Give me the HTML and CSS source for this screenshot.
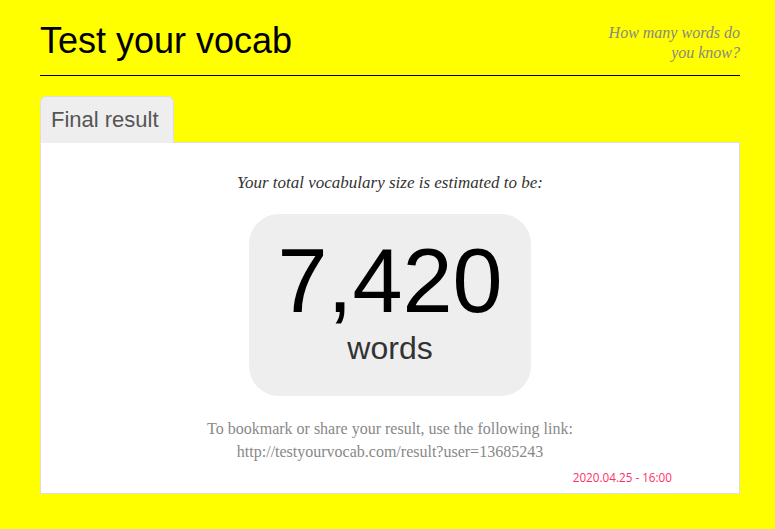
FILE: index.html
```html
<!DOCTYPE html>
<html>
<head>
<meta charset="utf-8">
<link rel="stylesheet" href="styles.css">
</head>
<body>
<div class="page">
  <header class="header">
    <h1 class="title">Test your vocab</h1>
    <div class="tagline">How many words do<br>you know?</div>
  </header>
  <div class="tabs">
    <div class="tab">Final result</div>
  </div>
  <div class="panel">
    <p class="intro">Your total vocabulary size is estimated to be:</p>
    <div class="result">
      <div class="number">7,420</div>
      <div class="unit">words</div>
    </div>
    <p class="share">To bookmark or share your result, use the following link:<br>http://testyourvocab.com/result?user=13685243</p>
    <div class="date">2020.04.25 - 16:00</div>
  </div>
</div>
</body>
</html>
```

FILE: styles.css
```css
html, body {
  margin: 0;
  padding: 0;
  background: #ffff00;
}
.page {
  width: 700px;
  margin: 0 0 0 40px;
  padding-top: 18px;
}
.header {
  display: flex;
  justify-content: space-between;
  align-items: flex-start;
  border-bottom: 1px solid #000;
  height: 57px;
}
.title {
  margin: 0;
  font-family: "Liberation Sans", Arial, sans-serif;
  font-weight: normal;
  font-size: 36px;
  line-height: 46px;
  color: #000;
}
.tagline {
  margin-top: 5px;
  font-family: "Liberation Serif", serif;
  font-style: italic;
  font-size: 16px;
  line-height: 20px;
  color: #888;
  text-align: right;
}
.tabs {
  display: flex;
  margin-top: 20px;
}
.tab {
  box-sizing: border-box;
  width: 134px;
  height: 47px;
  margin-bottom: -1px;
  padding: 11px 0 0 10px;
  background: #eeeeee;
  border: 1px solid #dddddd;
  border-bottom: 1px solid #eeeeee;
  border-radius: 6px 6px 0 0;
  font-family: "Liberation Sans", Arial, sans-serif;
  font-size: 22px;
  line-height: 24px;
  color: #555;
}
.panel {
  box-sizing: border-box;
  height: 352px;
  background: #fff;
  border: 1px solid #dddddd;
  display: flex;
  flex-direction: column;
  align-items: center;
}
.intro {
  margin: 30px 0 0;
  font-family: "Liberation Serif", serif;
  font-style: italic;
  font-size: 17px;
  line-height: 20px;
  color: #333;
}
.result {
  margin-top: 21px;
  width: 282px;
  height: 182px;
  background: #eeeeee;
  border-radius: 30px;
  display: flex;
  flex-direction: column;
  align-items: center;
  font-family: "Liberation Sans", Arial, sans-serif;
}
.number {
  margin-top: 20px;
  font-size: 90px;
  line-height: 95px;
  color: #000;
}
.unit {
  font-size: 32px;
  line-height: 38px;
  color: #333;
}
.share {
  margin: 21px 0 0;
  font-family: "Liberation Serif", serif;
  font-size: 16px;
  line-height: 23px;
  color: #888;
  text-align: center;
}
.date {
  align-self: flex-end;
  margin: 6px 67px 0 0;
  font-family: "Open Sans", sans-serif;
  font-size: 11.7px;
  line-height: 16px;
  color: #ff2f6a;
}
```
